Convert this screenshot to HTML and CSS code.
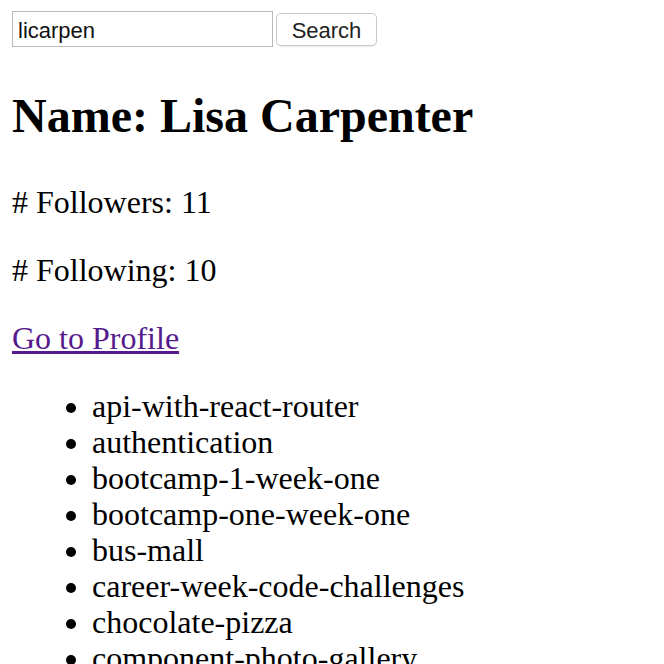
FILE: index.html
```html
<!DOCTYPE html>
<html lang="en">
<head>
<meta charset="utf-8">
<title>GitHub User</title>
<link rel="stylesheet" href="styles.css">
</head>
<body>
<form class="search">
  <input class="search-input" type="text" value="licarpen">
  <button class="search-button" type="button">Search</button>
</form>
<h2 class="name">Name: Lisa Carpenter</h2>
<p class="stat"># Followers: 11</p>
<p class="stat"># Following: 10</p>
<p class="stat"><a class="profile-link" href="#profile">Go to Profile</a></p>
<ul class="repos">
  <li>api-with-react-router</li>
  <li>authentication</li>
  <li>bootcamp-1-week-one</li>
  <li>bootcamp-one-week-one</li>
  <li>bus-mall</li>
  <li>career-week-code-challenges</li>
  <li>chocolate-pizza</li>
  <li>component-photo-gallery</li>
</ul>
</body>
</html>
```
FILE: styles.css
```css
html, body {
  background: #ffffff;
}
body {
  margin: 0;
  padding: 11px 12px 0 12px;
  font-family: "Liberation Serif", "Times New Roman", serif;
  font-size: 32px;
  line-height: 36px;
  color: #000000;
}
.search {
  display: flex;
  align-items: center;
  gap: 3px;
  margin: 0;
}
.search-input {
  box-sizing: border-box;
  width: 261px;
  height: 36px;
  margin: 0;
  padding: 3px 5px 0 5px;
  border: 1px solid #b9b9b9;
  border-radius: 0;
  font-family: "Liberation Sans", Arial, sans-serif;
  font-size: 22px;
  color: #111111;
  background: #ffffff;
  outline: none;
}
.search-button {
  box-sizing: border-box;
  width: 101px;
  height: 33px;
  margin: 0;
  padding: 3px 0 0 0;
  border: 1px solid #c9c9c9;
  border-radius: 5px;
  background: #ffffff;
  box-shadow: 0 1px 1px rgba(0, 0, 0, 0.08);
  font-family: "Liberation Sans", Arial, sans-serif;
  font-size: 22px;
  color: #222222;
}
.name {
  font-size: 48px;
  line-height: 55px;
  font-weight: bold;
  margin: 41px 0 41px 0;
}
.stat {
  margin: 32px 0;
}
.profile-link {
  color: #551a8b;
  text-decoration: underline;
}
.repos {
  margin: 32px 0;
  padding-left: 80px;
  list-style: disc;
}
```
